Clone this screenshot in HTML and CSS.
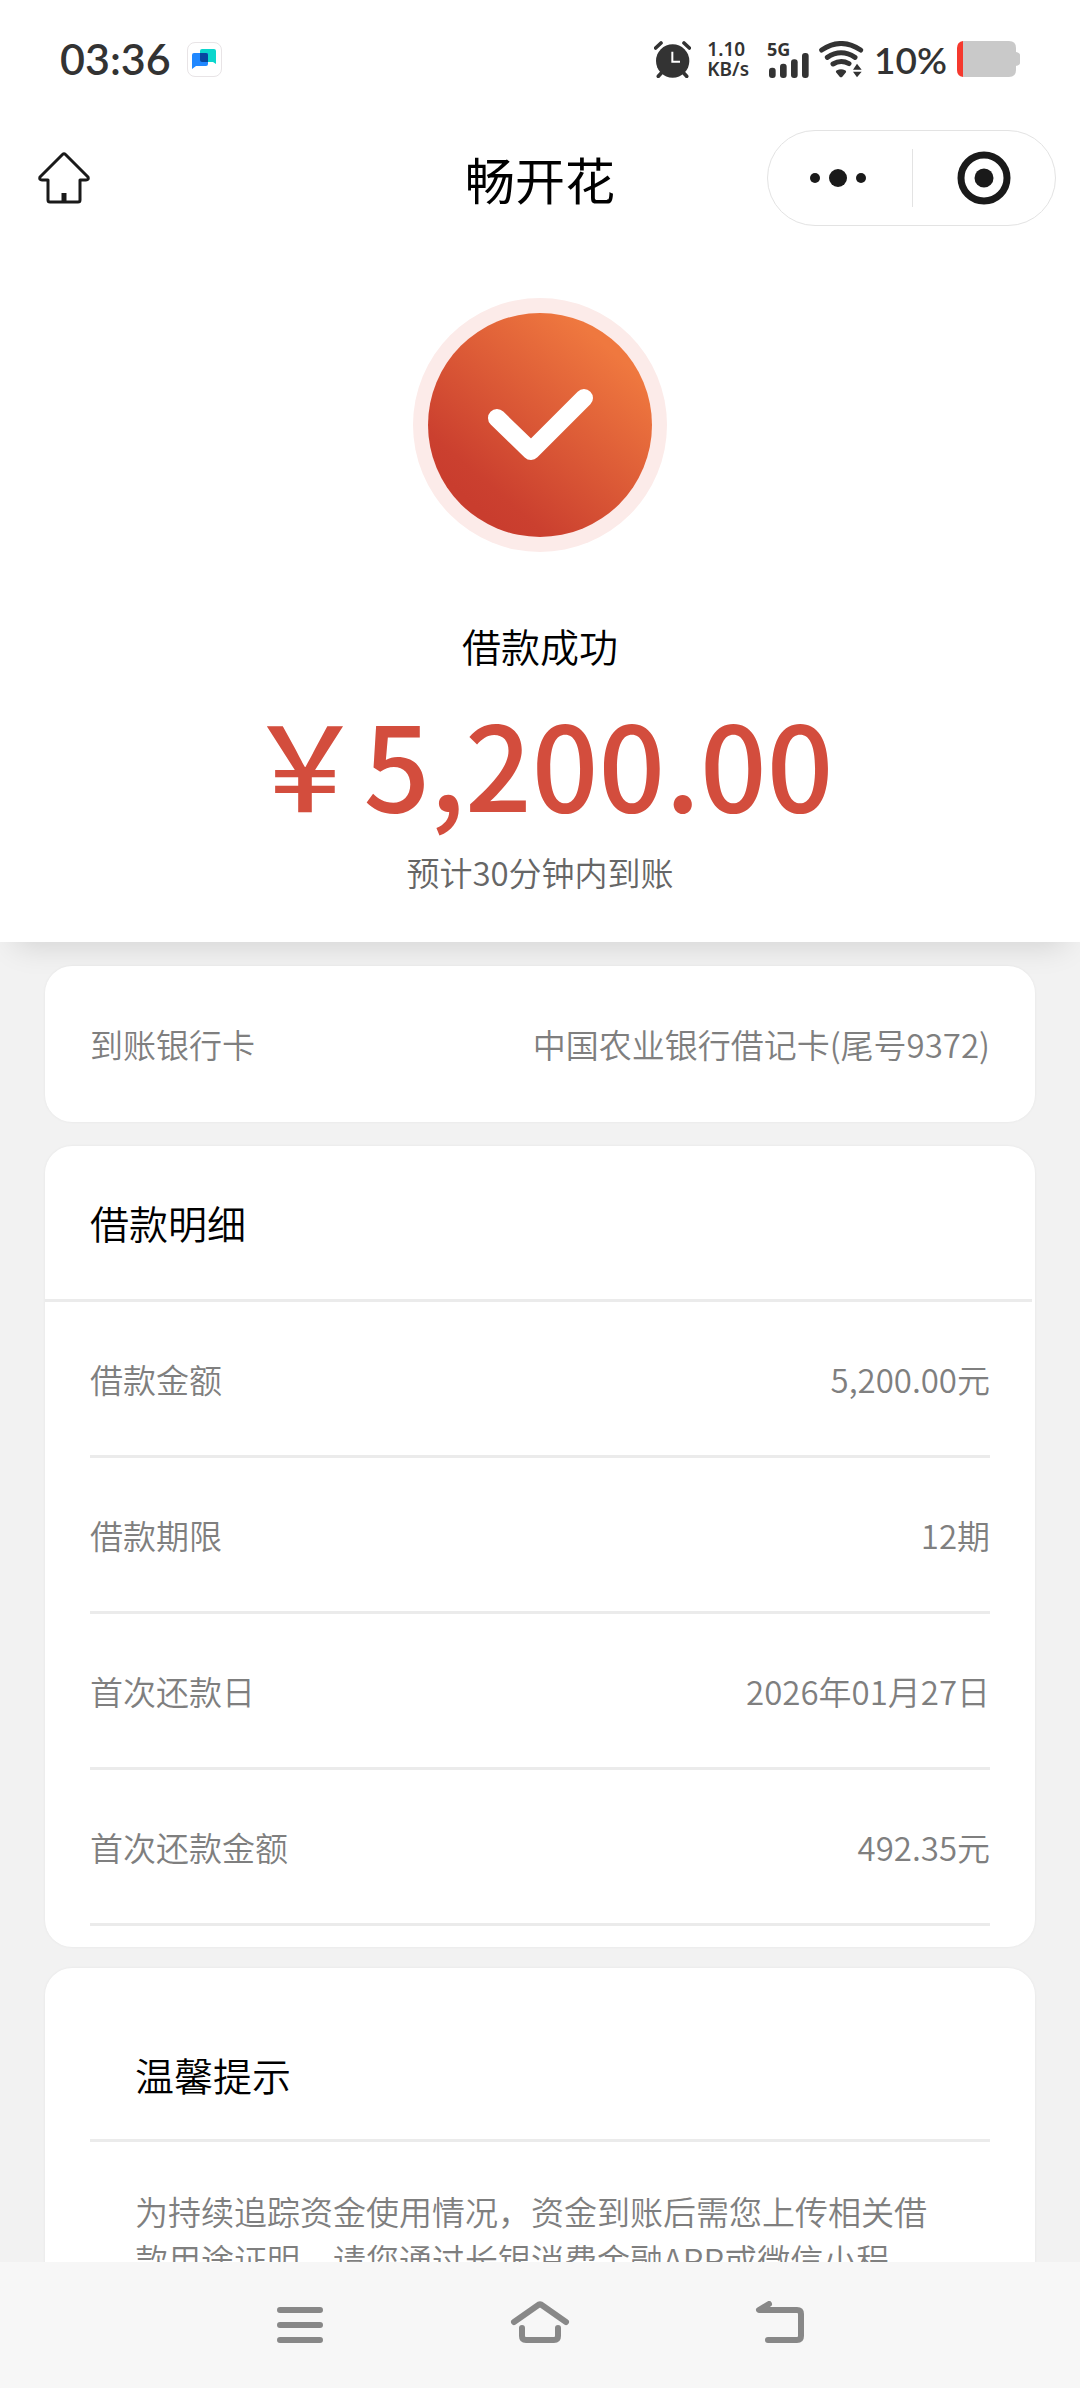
FILE: index.html
```html
<!DOCTYPE html>
<html lang="zh-CN">
<head>
<meta charset="utf-8">
<meta name="viewport" content="width=device-width, initial-scale=1">
<title>畅开花</title>
<link rel="stylesheet" href="styles.css">
</head>
<body>
<div class="status">
  <div class="status-left">
    <span class="clock">03:36</span>
    <span class="app-badge">
      <svg width="24" height="20" viewBox="0 0 24 20" aria-hidden="true">
        <path fill="#0bd6cd" d="M10 0h12a2 2 0 0 1 2 2v13l-3-2H8V2a2 2 0 0 1 2-2z"/>
        <path fill="#2188ff" d="M2 4h14v11a2 2 0 0 1-2 2H4l-4 3V6a2 2 0 0 1 2-2z"/>
        <path fill="#0747a0" d="M8 4h6a2 2 0 0 1 2 2v7H10a2 2 0 0 1-2-2z"/>
      </svg>
    </span>
  </div>
  <div class="status-right">
    <svg class="alarm" width="37" height="37" viewBox="0 0 111 111" aria-hidden="true">
      <circle cx="56" cy="60" r="50" fill="#333"/>
      <path d="M5 21 21 6M106 21 90 6M13 106 24 94M98 106 87 94" stroke="#333" stroke-width="11" stroke-linecap="round" fill="none"/>
      <path d="M55 32v30h23" stroke="#fff" stroke-width="6" fill="none"/>
    </svg>
    <span class="speed"><span>1.10</span><span>KB/s</span></span>
    <span class="cell">
      <span class="cell-type">5G</span>
      <svg class="cell-bars" width="40" height="25" viewBox="0 0 120 75" fill="#333" aria-hidden="true">
        <rect x="0" y="44" width="20" height="31" rx="9"/><rect x="33" y="32" width="20" height="43" rx="9"/>
        <rect x="66" y="19" width="20" height="56" rx="9"/><rect x="99" y="0" width="20" height="75" rx="9"/>
      </svg>
    </span>
    <svg width="45" height="37" viewBox="0 0 135 111" aria-hidden="true">
      <g fill="none" stroke="#333" stroke-width="15" stroke-linecap="round">
        <path d="M8 27Q66-12 125 27"/><path d="M25 49Q66 22 108 49"/><path d="M42 69Q66 55 90 68"/>
      </g>
      <path fill="#333" d="M51 94Q49 90 54 88Q66 82 78 88Q83 90 81 94L70 107Q66 111 62 107zM102 86 114 68 128 86zM102 92h26L114 109z"/>
    </svg>
    <span class="percent">10%</span>
    <svg width="63" height="36" viewBox="0 0 63 36" aria-hidden="true">
      <path fill="#c9c9c9" d="M6 0h46q7 0 7 7v4q4 1 4 3v8q0 2-4 3v4q0 7-7 7H6z"/>
      <path fill="#f5392e" d="M6 0v36Q0 35 0 29V7Q0 1 6 0z"/>
    </svg>
  </div>
</div>

<header class="appbar">
  <button class="icon-btn home" aria-label="首页">
    <svg width="52" height="52" viewBox="0 0 52 52" fill="none" stroke="#1a1a1a" stroke-width="3" stroke-linejoin="round" aria-hidden="true">
      <path d="M24.500 2.500Q26 1 27.500 2.500L50 25Q51 28 48 28H42V48Q42 50 40 50H12Q10 50 10 48V28H4Q1 28 2 25z"/>
      <path d="M26 41v9" stroke-width="5"/>
    </svg>
  </button>
  <h1 class="title">畅开花</h1>
  <div class="capsule">
    <button class="icon-btn more" aria-label="更多">
      <svg width="58" height="20" viewBox="0 0 58 20" fill="#1a1a1a" aria-hidden="true"><circle cx="6" cy="10" r="5"/><circle cx="29" cy="10" r="9"/><circle cx="52" cy="10" r="5"/></svg>
    </button>
    <button class="icon-btn close" aria-label="关闭">
      <svg width="54" height="54" viewBox="0 0 54 54" aria-hidden="true"><circle cx="27" cy="27" r="23" fill="none" stroke="#1a1a1a" stroke-width="7"/><circle cx="27" cy="27" r="9.500" fill="#1a1a1a"/></svg>
    </button>
  </div>
</header>

<main class="content">
  <section class="result">
    <svg class="result-icon" width="254" height="254" viewBox="0 0 254 254" aria-hidden="true">
      <defs><linearGradient id="disc" x1="0.200" y1="0.850" x2="0.800" y2="0.150"><stop offset="0" stop-color="#c93d2e"/><stop offset="0.120" stop-color="#cb402f"/><stop offset="1" stop-color="#ef783f"/></linearGradient></defs>
      <circle cx="127" cy="127" r="127" fill="#fcebe9"/>
      <circle cx="127" cy="127" r="112" fill="url(#disc)"/>
      <path d="M84 120l34 33 53-53" fill="none" stroke="#fff" stroke-width="18" stroke-linecap="round" stroke-linejoin="round"/>
    </svg>
    <p class="result-title">借款成功</p>
    <p class="amount">￥5,200.00</p>
    <p class="eta">预计30分钟内到账</p>
  </section>

  <dl class="card">
    <div class="row"><dt>到账银行卡</dt><dd>中国农业银行借记卡(尾号9372)</dd></div>
  </dl>

  <section class="card details">
    <h2 class="card-title">借款明细</h2>
    <dl class="rows">
      <div class="row"><dt>借款金额</dt><dd>5,200.00元</dd></div>
      <div class="row"><dt>借款期限</dt><dd>12期</dd></div>
      <div class="row"><dt>首次还款日</dt><dd>2026年01月27日</dd></div>
      <div class="row"><dt>首次还款金额</dt><dd>492.35元</dd></div>
    </dl>
  </section>

  <section class="card tips">
    <h2 class="tips-title">温馨提示</h2>
    <p class="tips-text">为持续追踪资金使用情况，资金到账后需您上传相关借款用途证明，请您通过长银消费金融APP或微信小程</p>
  </section>
</main>

<nav class="sysnav">
  <button class="icon-btn" aria-label="最近任务">
    <svg width="46" height="48" viewBox="0 0 46 48" stroke="#888" stroke-width="6" stroke-linecap="round" aria-hidden="true"><path d="M3 9h40M3 24h40M3 39h40"/></svg>
  </button>
  <button class="icon-btn" aria-label="主屏幕">
    <svg width="60" height="48" viewBox="0 0 60 48" fill="none" stroke="#888" stroke-width="6" stroke-linecap="round" stroke-linejoin="round" aria-hidden="true"><path d="M4 21 29 3.500Q30 3 31 3.500L56 21M12 27v8q0 4 4 4h28q4 0 4-4v-8"/></svg>
  </button>
  <button class="icon-btn" aria-label="返回">
    <svg width="50" height="48" viewBox="0 0 50 48" fill="none" stroke="#888" stroke-width="6" stroke-linecap="round" stroke-linejoin="round" aria-hidden="true"><path d="M14 3 4 9H42q4 0 4 4v22q0 4-4 4H13"/></svg>
  </button>
</nav>
</body>
</html>
```
FILE: styles.css
```css
* {
  box-sizing: border-box;
  margin: 0;
  padding: 0;
}

body {
  display: flex;
  flex-direction: column;
  height: 100vh;
  background: #f2f2f2;
  color: #000;
  font-family: "Noto Sans CJK SC", sans-serif;
  font-weight: 350;
}

.icon-btn {
  display: flex;
  align-items: center;
  justify-content: center;
  border: 0;
  background: none;
}

/* System status bar */
.status {
  display: flex;
  flex: none;
  align-items: center;
  justify-content: space-between;
  height: 118px;
  padding: 0 60px;
  background: #fff;
  color: #333;
  font-family: Lato, sans-serif;
}

.status-left,
.status-right {
  display: flex;
  align-items: center;
}

.status-left {
  gap: 16px;
}

.status-right {
  gap: 10px;
}

.clock {
  font-size: 43px;
  font-weight: 600;
  line-height: 50px;
}

.app-badge {
  display: flex;
  align-items: center;
  justify-content: center;
  width: 35px;
  height: 35px;
  border: 1px solid #e8e4e6;
  border-radius: 8px;
}

.alarm {
  margin-right: 6px;
}

.speed {
  display: flex;
  flex-direction: column;
  margin-right: 8px;
  font: 600 19px/20px "Noto Sans", sans-serif;
}

.cell {
  display: grid;
  height: 37px;
}

.cell-type,
.cell-bars {
  grid-area: 1 / 1;
}

.cell-type {
  font: 700 18px/17px "Noto Sans", sans-serif;
}

.cell-bars {
  align-self: end;
  margin-left: 2px;
}

.percent {
  font-size: 37px;
  font-weight: 600;
}

/* Mini-program title bar */
.appbar {
  display: grid;
  flex: none;
  grid-template-columns: 1fr auto 1fr;
  align-items: center;
  height: 120px;
  padding: 0 24px;
  background: #fff;
}

.home {
  justify-self: start;
  margin-left: 14px;
}

.title {
  font-size: 50px;
  font-weight: 400;
  line-height: 72px;
}

.capsule {
  display: grid;
  grid-template-columns: 1fr 1fr;
  justify-self: end;
  align-items: center;
  width: 289px;
  height: 96px;
  border: 1px solid #e3e3e3;
  border-radius: 48px;
}

.more {
  padding-right: 4px;
}

.close {
  height: 58px;
  border-left: 1px solid #e3e3e3;
}

/* Scrolling page */
.content {
  flex: 1;
  min-height: 0;
  overflow-y: auto;
  scrollbar-width: none;
}

.result {
  display: flex;
  flex-direction: column;
  align-items: center;
  padding: 60px 0 46px;
  background: #fff;
  box-shadow: 0 18px 30px -15px rgba(0, 0, 0, 0.14);
}

.result-title {
  margin-top: 64px;
  font-size: 39px;
  line-height: 58px;
}

.amount {
  color: #d34d3d;
  font-size: 117px;
  font-weight: 500;
  line-height: 174px;
}

.eta {
  color: #666;
  font-size: 33px;
  line-height: 48px;
}

.card {
  position: relative;
  margin: 24px 45px 0;
  border-radius: 27px;
  background: #fff;
  box-shadow: 0 0 3px rgba(0, 0, 0, 0.06);
}

.row {
  display: flex;
  align-items: center;
  justify-content: space-between;
  height: 156px;
  color: #7f7f7f;
  font-size: 33px;
  line-height: 48px;
}

.card > .row {
  margin: 0 45px;
}

.details {
  padding-bottom: 21px;
}

.card-title {
  margin-right: 3px;
  padding: 48px 45px;
  border-bottom: 3px solid #ebebeb;
  font-size: 39px;
  font-weight: inherit;
  line-height: 57px;
}

.rows {
  margin: 0 45px;
}

.rows .row {
  border-bottom: 3px solid #ebebeb;
}

.tips {
  margin-top: 21px;
  padding: 45px 45px 90px;
}

.tips-title {
  padding: 33px 45px 36px;
  border-bottom: 3px solid #ebebeb;
  font-size: 39px;
  font-weight: inherit;
  line-height: 57px;
}

.tips-text {
  padding: 45px 45px 0;
  color: #7f7f7f;
  font-size: 33px;
  line-height: 48px;
}

/* System navigation */
.sysnav {
  display: grid;
  flex: none;
  grid-template-columns: repeat(3, 1fr);
  height: 126px;
  padding: 0 calc(100% / 6);
  background: #f7f7f7;
}
```
